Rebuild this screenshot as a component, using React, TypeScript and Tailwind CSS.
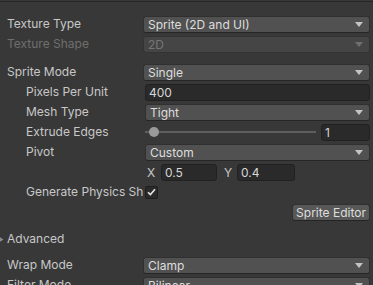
import React from 'react';
import clsx from 'clsx';

function Arrow({ dim }: { dim?: boolean }) {
  return (
    <svg width="8" height="5" viewBox="0 0 8 5" className="shrink-0">
      <path d="M0 0H8L4 5Z" fill={dim ? '#6f6f6f' : '#c4c4c4'} />
    </svg>
  );
}

function Popup({ value, disabled }: { value: string; disabled?: boolean }) {
  return (
    <div
      className={clsx(
        'flex h-[17px] items-center justify-between rounded-[3px] border pl-[4px] pr-[6px]',
        disabled
          ? 'border-[#333333] bg-[#454545] text-[#767676]'
          : 'border-[#303030] border-b-[#262626] bg-[#515151] text-[#dedede]'
      )}
    >
      <span className="leading-[15px]">{value}</span>
      <Arrow dim={disabled} />
    </div>
  );
}

function Field({ value, className }: { value: string; className?: string }) {
  return (
    <div
      className={clsx(
        'flex h-[17px] items-center rounded-[3px] border border-[#212121] bg-[#2a2a2a] pl-[3px] text-[#d6d6d6]',
        className
      )}
    >
      <span className="leading-[15px]">{value}</span>
    </div>
  );
}

function Row({
  label,
  indent,
  disabled,
  children,
}: {
  label: string;
  indent?: boolean;
  disabled?: boolean;
  children: React.ReactNode;
}) {
  return (
    <div className="flex h-[20px] items-center pr-[3px]">
      <div
        className={clsx(
          'w-[143px] shrink-0 overflow-hidden whitespace-nowrap leading-[16px]',
          indent ? 'pl-[26px]' : 'pl-[7px]',
          disabled ? 'text-[#6e6e6e]' : 'text-[#c8c8c8]'
        )}
      >
        {label}
      </div>
      <div className={clsx('min-w-0 flex-1', indent && 'ml-[2px]')}>{children}</div>
    </div>
  );
}

export default function App() {
  return (
    <div
      className="h-[285px] w-[373px] overflow-hidden bg-[#383838] text-[12px]"
      style={{ fontFamily: 'Inter, "Noto Sans", sans-serif' }}
    >
      <div className="mt-[1px] h-[1px] bg-[#262626]" />
      <div className="mt-[12px]">
        <Row label="Texture Type">
          <Popup value="Sprite (2D and UI)" />
        </Row>
        <Row label="Texture Shape" disabled>
          <Popup value="2D" disabled />
        </Row>
      </div>

      <div className="mt-[8px]">
        <Row label="Sprite Mode">
          <Popup value="Single" />
        </Row>
        <Row label="Pixels Per Unit" indent>
          <Field value="400" />
        </Row>
        <Row label="Mesh Type" indent>
          <Popup value="Tight" />
        </Row>
        <Row label="Extrude Edges" indent>
          <div className="flex items-center gap-[5px]">
            <div className="relative flex h-[17px] flex-1 items-center">
              <div className="h-[2px] w-full bg-[#5e5e5e]" />
              <div className="absolute left-[4px] h-[10px] w-[10px] rounded-full bg-[#9a9a9a]" />
            </div>
            <Field value="1" className="w-[49px]" />
          </div>
        </Row>
        <Row label="Pivot" indent>
          <Popup value="Custom" />
        </Row>
        <Row label="" indent>
          <div className="flex items-center text-[#c8c8c8]">
            <span className="ml-[2px] w-[14px] leading-[15px]">X</span>
            <Field value="0.5" className="w-[56px]" />
            <span className="ml-[7px] w-[13px] leading-[15px]">Y</span>
            <Field value="0.4" className="w-[58px]" />
          </div>
        </Row>
        <Row label="Generate Physics Shape" indent>
          <div className="flex h-[13px] w-[13px] items-center justify-center rounded-[2px] border border-[#1e1e1e] bg-[#2a2a2a]">
            <svg width="9" height="8" viewBox="0 0 9 8">
              <path d="M1 4.2L3.4 6.6L8 1.2" fill="none" stroke="#e6e6e6" strokeWidth="1.6" />
            </svg>
          </div>
        </Row>
        <div className="flex h-[20px] items-center justify-end pr-[3px]">
          <button
            type="button"
            className="flex h-[17px] w-[78px] items-center justify-center rounded-[3px] border border-[#303030] border-b-[#242424] bg-[#585858] leading-[15px] text-[#dedede]"
          >
            Sprite Editor
          </button>
        </div>
      </div>

      <div className="mt-[7px] flex h-[20px] items-center">
        <svg width="4" height="7" viewBox="0 0 4 7" className="shrink-0">
          <path d="M-2 0L3.5 3.5L-2 7Z" fill="#8a8a8a" />
        </svg>
        <span className="ml-[3px] leading-[16px] text-[#c8c8c8]">Advanced</span>
      </div>

      <div className="mt-[6px]">
        <Row label="Wrap Mode">
          <Popup value="Clamp" />
        </Row>
        <Row label="Filter Mode">
          <Popup value="Bilinear" />
        </Row>
      </div>
    </div>
  );
}
